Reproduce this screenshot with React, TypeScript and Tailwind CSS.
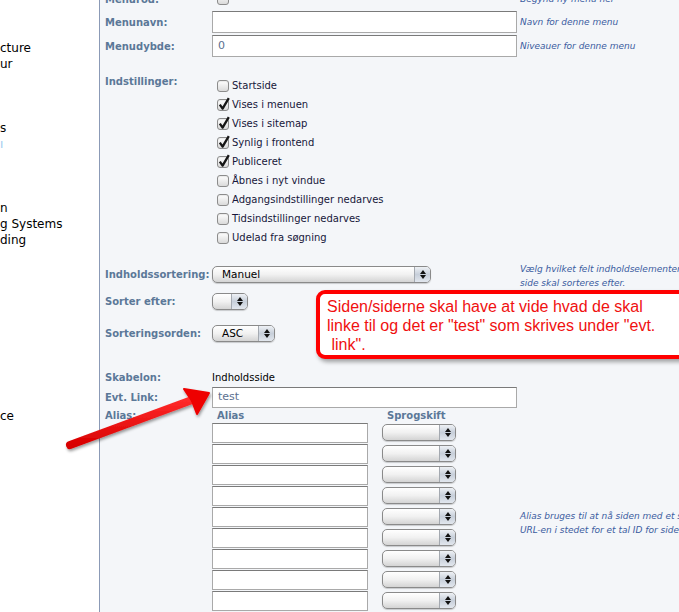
import React from "react";

const font = "font-['DejaVu_Sans',Verdana,sans-serif]";
const label = "w-[107px] shrink-0 text-[10px] font-bold text-[#5b7898]";
const hint = "ml-[3px] text-[9px] italic leading-[14px] text-[#3b5ca0] whitespace-nowrap";

function Check({ checked = false }: { checked?: boolean }) {
  return (
    <span className="relative inline-block h-[12px] w-[12px] shrink-0 rounded-[3px] border border-[#8c8c8c] bg-gradient-to-b from-white to-[#dadada] shadow-[inset_0_1px_1px_rgba(0,0,0,0.08)]">
      {checked && (
        <svg
          className="absolute -top-[3px] left-[0px]"
          width="12"
          height="14"
          viewBox="0 0 12 14"
        >
          <path
            d="M1.8 7.6 L4.6 11.6 L10.8 1.2"
            stroke="#151515"
            strokeWidth="2.3"
            fill="none"
            strokeLinejoin="round"
          />
        </svg>
      )}
    </span>
  );
}

function Select({ width, value }: { width: string; value?: string }) {
  return (
    <div
      className={`flex h-[17px] shrink-0 overflow-hidden rounded-[5px] border border-[#8a8a8a] bg-gradient-to-b from-white via-[#f1f1f1] to-[#d4d4d4] shadow-[0_1px_1px_rgba(0,0,0,0.18)] ${width}`}
    >
      <div className="flex-1 pl-[9px] text-[10.5px] leading-[15px] text-black">
        {value}
      </div>
      <div className="flex w-[16px] flex-col items-center justify-center gap-[1px] border-l border-[#a4a9b0] bg-gradient-to-b from-[#eef1f5] via-[#c7cfda] to-[#e2e7ee]">
        <svg width="6" height="4" viewBox="0 0 6 4">
          <path d="M3 0 L6 4 L0 4 Z" fill="#111" />
        </svg>
        <svg width="6" height="4" viewBox="0 0 6 4">
          <path d="M0 0 L6 0 L3 4 Z" fill="#111" />
        </svg>
      </div>
    </div>
  );
}

function TextInput({ value, className = "" }: { value?: string; className?: string }) {
  return (
    <div
      className={`shrink-0 border border-[#a9a9a9] border-t-[#7a7a7a] bg-white pl-[5px] text-[11px] text-[#5b7090] flex items-center ${className}`}
    >
      {value}
    </div>
  );
}

const sidebarLines: Record<number, React.ReactNode> = {
  0: "cture",
  1: "ur",
  5: "s",
  6: <span className="text-[#9ccbef]">ı</span>,
  10: "n",
  11: "g Systems",
  12: "ding",
  23: "ce",
};

const settings: [string, boolean][] = [
  ["Startside", false],
  ["Vises i menuen", true],
  ["Vises i sitemap", true],
  ["Synlig i frontend", true],
  ["Publiceret", true],
  ["Åbnes i nyt vindue", false],
  ["Adgangsindstillinger nedarves", false],
  ["Tidsindstillinger nedarves", false],
  ["Udelad fra søgning", false],
];

export default function App() {
  return (
    <div className={`relative flex h-[612px] w-[679px] overflow-hidden bg-[#f4f6f9] ${font}`}>
      <aside className="w-[100px] shrink-0 overflow-hidden border-r border-[#8b9ab6] bg-white pt-[40px] text-[12px] leading-[16px] text-black">
        {Array.from({ length: 26 }).map((_, i) => (
          <div key={i} className="h-[16px] whitespace-nowrap">
            {sidebarLines[i] ?? ""}
          </div>
        ))}
      </aside>

      <main className="flex-1 pl-[5px]">
        <div className="-mt-[12px] flex flex-col">
          {/* Menurod */}
          <div className="flex h-[22px] items-center">
            <div className={label}>Menurod:</div>
            <div className="flex w-[305px] items-center pl-[5px]">
              <Check />
            </div>
            <div className={hint}>Begynd ny menu her</div>
          </div>

          {/* Menunavn */}
          <div className="mt-[1px] flex h-[22px] items-center">
            <div className={label}>Menunavn:</div>
            <TextInput className="h-[22px] w-[305px]" />
            <div className={hint}>Navn for denne menu</div>
          </div>

          {/* Menudybde */}
          <div className="mt-[2px] flex h-[22px] items-center">
            <div className={label}>Menudybde:</div>
            <TextInput className="h-[22px] w-[305px]" value="0" />
            <div className={hint}>Niveauer for denne menu</div>
          </div>

          {/* Indstillinger */}
          <div className="mt-[19px] flex">
            <div className={`${label} leading-[11px]`}>Indstillinger:</div>
            <div className="flex flex-col pl-[5px]">
              {settings.map(([text, checked]) => (
                <div key={text} className="flex h-[19px] items-center gap-[3px]">
                  <Check checked={checked} />
                  <span className="text-[10px] text-[#16163a]">{text}</span>
                </div>
              ))}
            </div>
          </div>

          {/* Indholdssortering */}
          <div className="mt-[15px] flex h-[28px] items-start">
            <div className={`${label} mt-[4px] flex h-[17px] items-center`}>
              Indholdssortering:
            </div>
            <div className="mt-[4px] w-[305px]">
              <Select width="w-[219px]" value="Manuel" />
            </div>
            <div className={hint}>
              Vælg hvilket felt indholdselementer
              <br />
              side skal sorteres efter.
            </div>
          </div>

          {/* Sorter efter */}
          <div className="mt-[3px] flex h-[17px] items-center">
            <div className={label}>Sorter efter:</div>
            <Select width="w-[36px]" />
          </div>

          {/* Sorteringsorden */}
          <div className="mt-[15px] flex h-[17px] items-center">
            <div className={label}>Sorteringsorden:</div>
            <Select width="w-[63px]" value="ASC" />
          </div>

          {/* Skabelon */}
          <div className="mt-[27px] flex h-[16px] items-center">
            <div className={label}>Skabelon:</div>
            <div className="text-[10px] text-black">Indholdsside</div>
          </div>

          {/* Evt. Link */}
          <div className="mt-[2px] flex h-[21px] items-center">
            <div className={label}>Evt. Link:</div>
            <TextInput className="h-[21px] w-[305px]" value="test" />
          </div>

          {/* Alias */}
          <div className="flex">
            <div className={`${label} flex h-[15px] items-center`}>Alias:</div>
            <div className="flex w-[305px] flex-col">
              <div className="flex h-[15px] items-center text-[10px] font-bold text-[#5b7898]">
                <div className="w-[170px] pl-[5px]">Alias</div>
                <div className="pl-[5px]">Sprogskift</div>
              </div>
              {Array.from({ length: 9 }).map((_, i) => (
                <div key={i} className="flex h-[21px] items-start gap-[14px]">
                  <TextInput className="h-[20px] w-[156px]" />
                  <div className="mt-[1px]">
                    <Select width="w-[74px]" />
                  </div>
                </div>
              ))}
            </div>
            <div className={`${hint} pt-[101px]`}>
              Alias bruges til at nå siden med et sigende
              <br />
              URL-en i stedet for et tal ID for siden.
            </div>
          </div>
        </div>
      </main>

      {/* Callout note */}
      <div className="absolute left-[316px] top-[290px] h-[69px] w-[390px] rounded-[9px] border-[4px] border-[#ff0000] bg-white pl-[7px] pt-[3px] shadow-[2px_3px_4px_rgba(0,0,0,0.35)] font-['Liberation_Sans',Arial,sans-serif] text-[16px] leading-[19px] text-[#f01010] whitespace-pre">
        <div>Siden/siderne skal have at vide hvad de skal</div>
        <div>linke til og det er "test" som skrives under "evt.</div>
        <div> link".</div>
      </div>

      {/* Red arrow */}
      <svg
        className="pointer-events-none absolute left-0 top-0"
        width="679"
        height="612"
        viewBox="0 0 679 612"
      >
        <defs>
          <filter id="sh" x="-20%" y="-20%" width="140%" height="140%">
            <feDropShadow dx="1" dy="2" stdDeviation="1.6" floodColor="#000" floodOpacity="0.4" />
          </filter>
          <linearGradient id="rg" x1="0" y1="0" x2="0" y2="1">
            <stop offset="0" stopColor="#ff2a2a" />
            <stop offset="1" stopColor="#d80000" />
          </linearGradient>
        </defs>
        <g filter="url(#sh)">
          <line
            x1="70"
            y1="445"
            x2="192"
            y2="400"
            stroke="url(#rg)"
            strokeWidth="8"
            strokeLinecap="round"
          />
          <path
            d="M209 393 L184 389 L192 401 L197 414 Z"
            fill="#ee0000"
            stroke="#ee0000"
            strokeWidth="2"
            strokeLinejoin="round"
          />
        </g>
      </svg>
    </div>
  );
}
